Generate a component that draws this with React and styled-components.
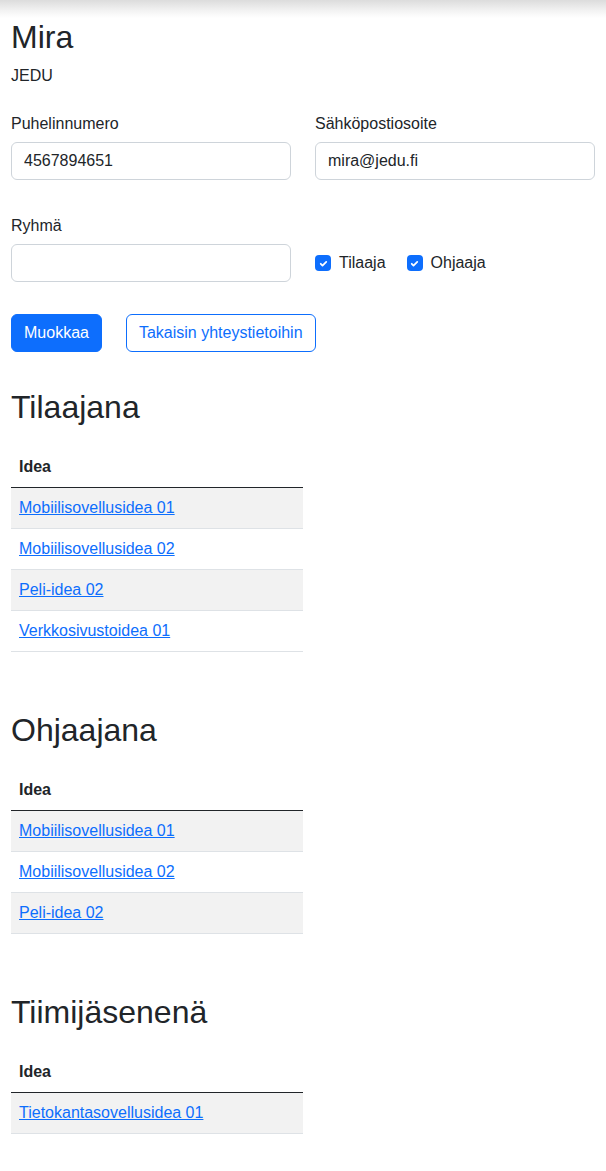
import React from 'react';
import styled, {createGlobalStyle} from 'styled-components';

const GlobalStyle = createGlobalStyle`
  html, body {
    margin: 0;
    padding: 0;
    background: #fff;
  }
  body {
    font-family: 'Liberation Sans', Arial, sans-serif;
    font-size: 16px;
    line-height: 24px;
    color: #212529;
  }
  * { box-sizing: border-box; }
`;

const Shade = styled.div`
  height: 18px;
  background: linear-gradient(to bottom, #dcdcdc 0%, #f3f3f3 60%, #fff 100%);
`;

const Page = styled.div`
  padding: 0 11px 20px;
`;

const Name = styled.h1`
  margin: 0 0 8px;
  font-size: 32px;
  line-height: 38px;
  font-weight: 400;
`;

const Org = styled.p`
  margin: 0 0 24px;
`;

const FormRow = styled.div`
  display: grid;
  grid-template-columns: 280px 280px;
  column-gap: 24px;
  margin-bottom: ${p => p.$mb || 0}px;
`;

const Field = styled.div`
  display: flex;
  flex-direction: column;
`;

const Label = styled.label`
  margin-bottom: 6px;
`;

const Input = styled.input`
  height: 38px;
  width: 100%;
  padding: 0 12px;
  font: inherit;
  color: #212529;
  border: 1px solid #ced4da;
  border-radius: 6px;
  background: #fff;
  outline: none;
`;

const Checks = styled.div`
  align-self: end;
  height: 38px;
  display: flex;
  align-items: center;
  gap: 21px;
`;

const CheckItem = styled.label`
  display: flex;
  align-items: center;
  gap: 8px;
`;

const Box = styled.span`
  width: 16px;
  height: 16px;
  border-radius: 4px;
  background: #0d6efd;
  display: flex;
  align-items: center;
  justify-content: center;
`;

const Buttons = styled.div`
  display: flex;
  gap: 24px;
  margin-bottom: 36px;
`;

const Button = styled.button`
  height: 38px;
  padding: 0 12px;
  font: inherit;
  border-radius: 6px;
  border: 1px solid #0d6efd;
  background: ${p => (p.$outline ? '#fff' : '#0d6efd')};
  color: ${p => (p.$outline ? '#0d6efd' : '#fff')};
`;

const Section = styled.section`
  margin-bottom: 59px;
`;

const Heading = styled.h2`
  margin: 0 0 21px;
  font-size: 32px;
  line-height: 38px;
  font-weight: 400;
`;

const Table = styled.table`
  width: 292px;
  border-collapse: collapse;
`;

const Th = styled.th`
  text-align: left;
  font-weight: 700;
  padding: 8px 8px;
  border-bottom: 1px solid #212529;
`;

const Row = styled.tr`
  background: ${p => (p.$striped ? '#f2f2f2' : '#fff')};
`;

const Td = styled.td`
  padding: 8px 8px;
  border-bottom: 1px solid #dee2e6;
`;

const Link = styled.a`
  color: #0d6efd;
  text-decoration: underline;
`;

const Check = () => (
  <Box>
    <svg width="11" height="11" viewBox="0 0 20 20">
      <path d="M5 10.5l3.2 3.2L15 7" fill="none" stroke="#fff" strokeWidth="3.2" strokeLinecap="round" strokeLinejoin="round" />
    </svg>
  </Box>
);

const sections = [
  {title: 'Tilaajana', ideas: ['Mobiilisovellusidea 01', 'Mobiilisovellusidea 02', 'Peli-idea 02', 'Verkkosivustoidea 01']},
  {title: 'Ohjaajana', ideas: ['Mobiilisovellusidea 01', 'Mobiilisovellusidea 02', 'Peli-idea 02']},
  {title: 'Tiimijäsenenä', ideas: ['Tietokantasovellusidea 01']},
];

export default function App() {
  return (
    <>
      <GlobalStyle />
      <Shade />
      <Page>
        <Name>Mira</Name>
        <Org>JEDU</Org>
        <FormRow $mb={34}>
          <Field>
            <Label>Puhelinnumero</Label>
            <Input defaultValue="4567894651" />
          </Field>
          <Field>
            <Label>Sähköpostiosoite</Label>
            <Input defaultValue="mira@jedu.fi" />
          </Field>
        </FormRow>
        <FormRow $mb={32}>
          <Field>
            <Label>Ryhmä</Label>
            <Input defaultValue="" />
          </Field>
          <Checks>
            <CheckItem><Check />Tilaaja</CheckItem>
            <CheckItem><Check />Ohjaaja</CheckItem>
          </Checks>
        </FormRow>
        <Buttons>
          <Button>Muokkaa</Button>
          <Button $outline>Takaisin yhteystietoihin</Button>
        </Buttons>
        {sections.map(s => (
          <Section key={s.title}>
            <Heading>{s.title}</Heading>
            <Table>
              <thead>
                <tr><Th>Idea</Th></tr>
              </thead>
              <tbody>
                {s.ideas.map((idea, i) => (
                  <Row key={idea} $striped={i % 2 === 0}>
                    <Td><Link href="#">{idea}</Link></Td>
                  </Row>
                ))}
              </tbody>
            </Table>
          </Section>
        ))}
      </Page>
    </>
  );
}
